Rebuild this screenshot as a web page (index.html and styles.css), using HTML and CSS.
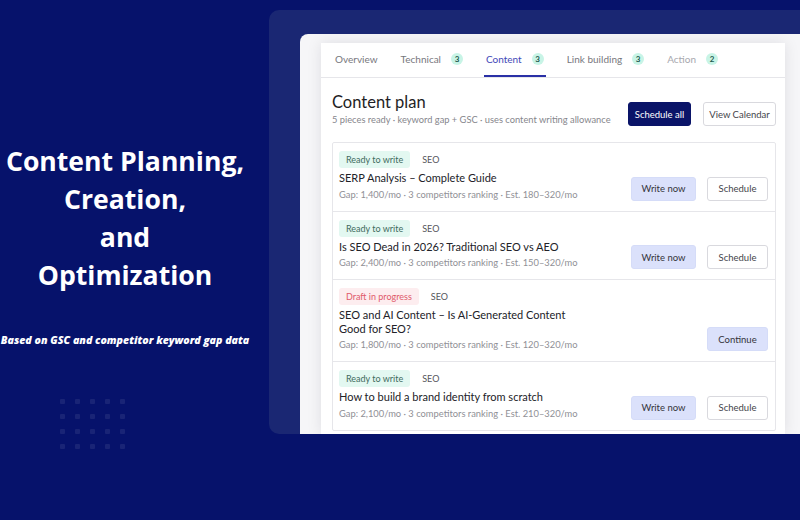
FILE: index.html
```html
<!DOCTYPE html>
<html lang="en">
<head>
<meta charset="utf-8">
<title>Content Planning</title>
<link rel="stylesheet" href="styles.css">
</head>
<body>
<main class="page">
  <section class="intro">
    <h1 class="intro-title">Content Planning,<br>Creation,<br>and<br>Optimization</h1>
    <p class="intro-sub">Based on GSC and competitor keyword gap data</p>
    <div class="dots">
      <span></span><span></span><span></span><span></span><span></span>
      <span></span><span></span><span></span><span></span><span></span>
      <span></span><span></span><span></span><span></span><span></span>
      <span></span><span></span><span></span><span></span><span></span>
    </div>
  </section>
  <section class="stage">
    <div class="frame">
      <div class="card">
        <div class="panel">
          <nav class="tabs">
            <span class="tab">Overview</span>
            <span class="tab">Technical <span class="count">3</span></span>
            <span class="tab active">Content <span class="count">3</span></span>
            <span class="tab">Link building <span class="count">3</span></span>
            <span class="tab muted">Action <span class="count">2</span></span>
          </nav>
          <div class="content">
            <header class="plan-head">
              <div>
                <h2 class="plan-title">Content plan</h2>
                <p class="plan-sub">5 pieces ready · keyword gap + GSC · uses content writing allowance</p>
              </div>
              <div class="actions">
                <button class="btn btn-dark w-all">Schedule all</button>
                <button class="btn btn-outline w-cal">View Calendar</button>
              </div>
            </header>
            <ul class="plan-list">
              <li class="row">
                <div class="info">
                  <div class="tags"><span class="status ready">Ready to write</span><span class="kind">SEO</span></div>
                  <p class="title">SERP Analysis – Complete Guide</p>
                  <p class="meta">Gap: 1,400/mo · 3 competitors ranking · Est. 180–320/mo</p>
                </div>
                <div class="row-actions">
                  <button class="btn btn-soft w-write">Write now</button>
                  <button class="btn btn-outline w-sched">Schedule</button>
                </div>
              </li>
              <li class="row">
                <div class="info">
                  <div class="tags"><span class="status ready">Ready to write</span><span class="kind">SEO</span></div>
                  <p class="title">Is SEO Dead in 2026? Traditional SEO vs AEO</p>
                  <p class="meta">Gap: 2,400/mo · 3 competitors ranking · Est. 150–320/mo</p>
                </div>
                <div class="row-actions">
                  <button class="btn btn-soft w-write">Write now</button>
                  <button class="btn btn-outline w-sched">Schedule</button>
                </div>
              </li>
              <li class="row">
                <div class="info">
                  <div class="tags"><span class="status draft">Draft in progress</span><span class="kind">SEO</span></div>
                  <p class="title">SEO and AI Content – Is AI-Generated Content Good for SEO?</p>
                  <p class="meta">Gap: 1,800/mo · 3 competitors ranking · Est. 120–320/mo</p>
                </div>
                <div class="row-actions">
                  <button class="btn btn-soft w-sched">Continue</button>
                </div>
              </li>
              <li class="row">
                <div class="info">
                  <div class="tags"><span class="status ready">Ready to write</span><span class="kind">SEO</span></div>
                  <p class="title">How to build a brand identity from scratch</p>
                  <p class="meta">Gap: 2,100/mo · 3 competitors ranking · Est. 210–320/mo</p>
                </div>
                <div class="row-actions">
                  <button class="btn btn-soft w-write">Write now</button>
                  <button class="btn btn-outline w-sched">Schedule</button>
                </div>
              </li>
            </ul>
          </div>
        </div>
      </div>
    </div>
  </section>
</main>
</body>
</html>
```

FILE: styles.css
```css
* { box-sizing: border-box; }
html, body { margin: 0; padding: 0; }
body {
  width: 800px;
  height: 520px;
  overflow: hidden;
  background: #06126b;
  font-family: "Lato", "Noto Sans", sans-serif;
}
.page {
  display: flex;
  height: 520px;
}
.intro {
  width: 250px;
  flex: none;
  display: flex;
  flex-direction: column;
  align-items: center;
  padding-top: 142px;
  color: #fff;
}
.intro-title {
  margin: 0;
  font-family: "Open Sans", sans-serif;
  font-weight: 700;
  font-size: 26.6px;
  line-height: 38px;
  text-align: center;
  white-space: nowrap;
}
.intro-sub {
  margin: 39px 0 0;
  font-family: "Open Sans", sans-serif;
  font-weight: 800;
  font-style: italic;
  font-size: 10.6px;
  line-height: 14px;
  white-space: nowrap;
}
.dots {
  align-self: flex-start;
  margin: 52px 0 0 60px;
  display: grid;
  grid-template-columns: repeat(5, 5px);
  grid-auto-rows: 5px;
  gap: 10px;
}
.dots span {
  background: rgba(255, 255, 255, 0.08);
  border-radius: 1px;
}
.stage {
  flex: 1;
  padding: 10px 0 0 19px;
}
.frame {
  height: 424px;
  background: #1a2773;
  border-radius: 10px 0 0 10px;
  padding: 24px 0 0 31px;
  overflow: hidden;
}
.card {
  height: 100%;
  background: #f6f6f8;
  border-radius: 8px 0 0 0;
  padding: 9px 15px 0 21px;
  overflow: hidden;
}
.panel {
  height: 100%;
  width: 464px;
  background: #fff;
  box-shadow: 0 0 14px rgba(20, 20, 40, 0.1);
  overflow: hidden;
}
.tabs {
  display: flex;
  height: 35px;
  padding-left: 12px;
  gap: 19px;
  border-bottom: 1px solid #e6e6ea;
}
.tab {
  display: flex;
  align-items: center;
  gap: 10px;
  padding: 0 2px;
  font-size: 10px;
  color: #77777d;
  border-bottom: 2px solid transparent;
}
.tab.active {
  color: #4248b8;
  border-bottom-color: #2a30a6;
}
.tab.muted { color: #a8a8ae; }
.count {
  width: 12px;
  height: 12px;
  border-radius: 50%;
  background: #c8f4e6;
  color: #1f5a4e;
  font-size: 8px;
  font-weight: 700;
  display: flex;
  align-items: center;
  justify-content: center;
}
.content {
  padding: 14px 9px 0 11px;
}
.plan-head {
  display: flex;
  justify-content: space-between;
  align-items: flex-end;
}
.plan-title {
  margin: 0;
  font-size: 16.5px;
  line-height: 20px;
  font-weight: 400;
  color: #1e1e24;
}
.plan-sub {
  margin: 1px 0 0;
  font-size: 9.3px;
  line-height: 13px;
  color: #86868c;
}
.actions {
  display: flex;
  gap: 12px;
}
.btn {
  height: 24px;
  padding: 0;
  border-radius: 3px;
  font-family: inherit;
  font-size: 9.5px;
  border: 1px solid transparent;
  display: flex;
  align-items: center;
  justify-content: center;
}
.btn-dark { background: #0a1468; color: #fff; border-color: #0a1468; }
.btn-outline { background: #fff; color: #45454b; border-color: #d9d9de; }
.btn-soft { background: #dbe1fb; color: #34343a; border-color: #d5dcf8; }
.w-all { width: 63px; }
.w-cal { width: 73px; }
.w-write { width: 65px; }
.w-sched { width: 61px; }
.plan-list {
  list-style: none;
  margin: 16px 0 0;
  padding: 0;
  border: 1px solid #e6e6ea;
  border-radius: 2px;
}
.row {
  display: flex;
  justify-content: space-between;
  align-items: flex-end;
  padding: 8px 7px 10px 6px;
  border-top: 1px solid #e6e6ea;
}
.row:first-child { border-top: none; }
.tags {
  display: flex;
  align-items: center;
  gap: 12px;
}
.status {
  height: 17px;
  padding: 0 7px;
  border-radius: 3px;
  font-size: 9px;
  display: flex;
  align-items: center;
}
.status.ready { background: #e3f8f1; color: #3f6b60; }
.status.draft { background: #fdedef; color: #e05a6b; }
.kind { font-size: 9px; color: #56565c; }
.title {
  margin: 3px 0 0;
  max-width: 245px;
  font-size: 11px;
  line-height: 13.5px;
  color: #222228;
}
.meta {
  margin: 3px 0 0;
  font-size: 9.35px;
  line-height: 13px;
  color: #909096;
  white-space: nowrap;
}
.row-actions {
  display: flex;
  gap: 11px;
}
```
